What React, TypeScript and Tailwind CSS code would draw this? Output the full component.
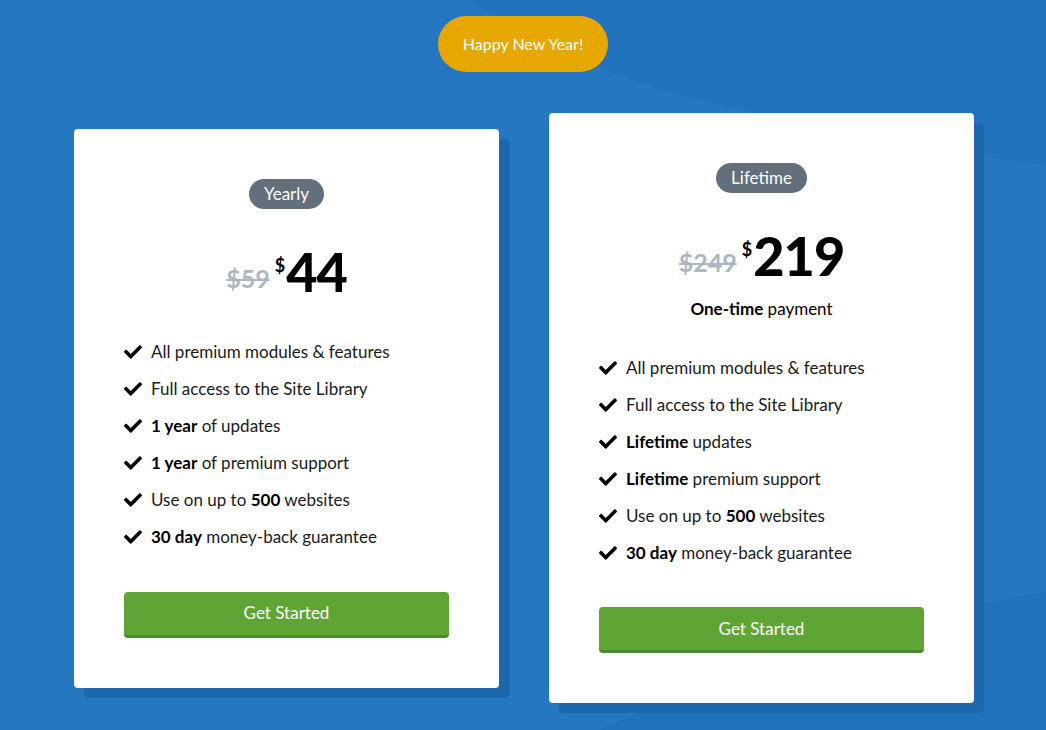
import React from 'react';
import { FaCheck } from 'react-icons/fa';

const body = { fontFamily: 'Lato, "Open Sans", sans-serif' };

interface Feature {
  bold?: string;
  before?: string;
  after?: string;
}

interface PlanProps {
  label: string;
  oldPrice: string;
  price: string;
  oneTime?: boolean;
  features: Feature[];
}

const Plan: React.FC<PlanProps> = ({ label, oldPrice, price, oneTime, features }) => {
  return (
    <div className="relative w-[425px]">
      <div className="absolute left-[10px] top-[10px] w-full h-full rounded-[4px] bg-[#1d68ad]" />
      <div className="relative bg-white rounded-[4px] px-[50px] py-[50px] flex flex-col items-center">
        <div className="h-[30px] px-[15px] rounded-full bg-[#636f7a] text-white text-[17px] flex items-center">
          {label}
        </div>

        <div className="mt-[36px] flex items-end leading-none">
          <span className="text-[25px] font-bold text-[#aab8c4] line-through decoration-2 mb-[8px]">{oldPrice}</span>
          <span className="text-[18px] font-bold text-black self-start ml-[5px] mt-[11px]">$</span>
          <span className="text-[54px] font-black text-black tracking-[-1px] ml-[1px]">{price}</span>
        </div>

        {oneTime && (
          <div className="mt-[16px] text-[17px] text-black leading-[20px]">
            <span className="font-bold">One-time</span> payment
          </div>
        )}

        <ul className={`w-full flex flex-col ${oneTime ? 'mt-[30px]' : 'mt-[35px]'}`}>
          {features.map((f, i) => (
            <li key={i} className="h-[37px] flex items-center gap-[9px] text-[17px] text-[#1a1a1a]">
              <FaCheck className="w-[18px] h-[18px] text-black shrink-0" />
              <span>
                {f.before}
                {f.bold && <span className="font-bold text-black">{f.bold}</span>}
                {f.after}
              </span>
            </li>
          ))}
        </ul>

        <button className="mt-[36px] w-full h-[46px] rounded-[4px] bg-[#5fa536] border-b-[3px] border-[#4a8a2b] text-white text-[17px]">
          Get Started
        </button>
      </div>
    </div>
  );
};

export default function App() {
  const yearly: Feature[] = [
    { before: 'All premium modules & features' },
    { before: 'Full access to the Site Library' },
    { bold: '1 year', after: ' of updates' },
    { bold: '1 year', after: ' of premium support' },
    { before: 'Use on up to ', bold: '500', after: ' websites' },
    { bold: '30 day', after: ' money-back guarantee' },
  ];
  const lifetime: Feature[] = [
    { before: 'All premium modules & features' },
    { before: 'Full access to the Site Library' },
    { bold: 'Lifetime', after: ' updates' },
    { bold: 'Lifetime', after: ' premium support' },
    { before: 'Use on up to ', bold: '500', after: ' websites' },
    { bold: '30 day', after: ' money-back guarantee' },
  ];

  return (
    <div className="relative w-full min-h-[730px] overflow-hidden bg-[#2072bd]" style={body}>
      <svg className="absolute inset-0 w-full h-full" viewBox="0 0 1046 730" preserveAspectRatio="none">
        <path d="M0 0 L470 0 Q560 60 680 95 Q860 140 1046 165 L1046 592 Q820 630 600 730 L0 730 Z" fill="#2477c0" />
      </svg>
      <div className="relative flex flex-col items-center pt-4 pb-[26px]">
        <div className="h-[56px] px-[25px] rounded-full bg-[#e6a800] text-white text-[16px] flex items-center">
          Happy New Year!
        </div>
        <div className="mt-[41px] ml-[2px] flex items-center gap-[50px]">
          <Plan label="Yearly" oldPrice="$59" price="44" features={yearly} />
          <Plan label="Lifetime" oldPrice="$249" price="219" oneTime features={lifetime} />
        </div>
      </div>
    </div>
  );
}
